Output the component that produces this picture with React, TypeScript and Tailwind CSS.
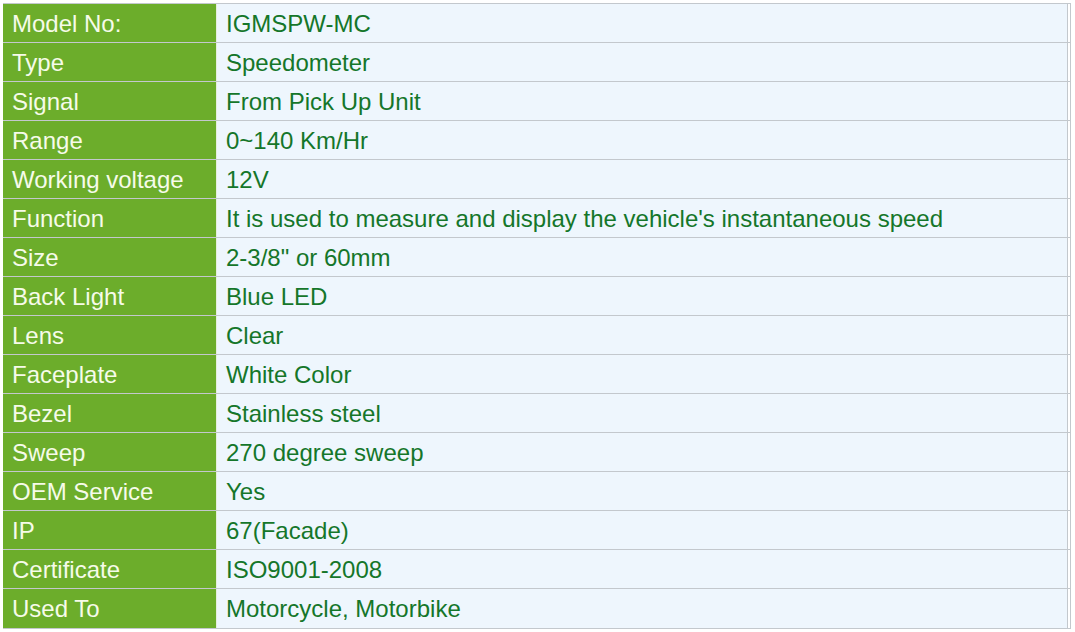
import React from "react";

const rows: [string, string][] = [
  ["Model No:", "IGMSPW-MC"],
  ["Type", "Speedometer"],
  ["Signal", "From Pick Up Unit"],
  ["Range", "0~140 Km/Hr"],
  ["Working voltage", "12V"],
  ["Function", "It is used to measure and display the vehicle's instantaneous speed"],
  ["Size", "2-3/8\" or 60mm"],
  ["Back Light", "Blue LED"],
  ["Lens", "Clear"],
  ["Faceplate", "White Color"],
  ["Bezel", "Stainless steel"],
  ["Sweep", "270 degree sweep"],
  ["OEM Service", "Yes"],
  ["IP", "67(Facade)"],
  ["Certificate", "ISO9001-2008"],
  ["Used To", "Motorcycle, Motorbike"],
];

export default function App() {
  return (
    <div className="w-[1075px] h-[632px] bg-white pt-[3px] pl-[3px]" style={{ fontFamily: '"Liberation Sans", Arial, sans-serif' }}>
      <div className="w-[1068px] border-t border-r border-b border-[#c3c8cd] flex flex-col">
        {rows.map(([k, v], i) => (
          <div
            key={k}
            className={`grid grid-cols-[214px_1fr] h-[39px] ${i < rows.length - 1 ? "border-b border-[#c3c8cd]" : ""}`}
          >
            <div className="bg-[#6cad2b] text-[#f6fbe9] text-[24px] leading-none flex items-center pl-[9px] pt-[1px] border-r border-[#e6eedd]">
              {k}
            </div>
            <div className="bg-[#eef6fd] text-[#15762a] text-[24px] leading-none flex items-center pl-[9px] pt-[1px] border-r border-[#c3c8cd] mr-[2px]">
              {v}
            </div>
          </div>
        ))}
      </div>
    </div>
  );
}
